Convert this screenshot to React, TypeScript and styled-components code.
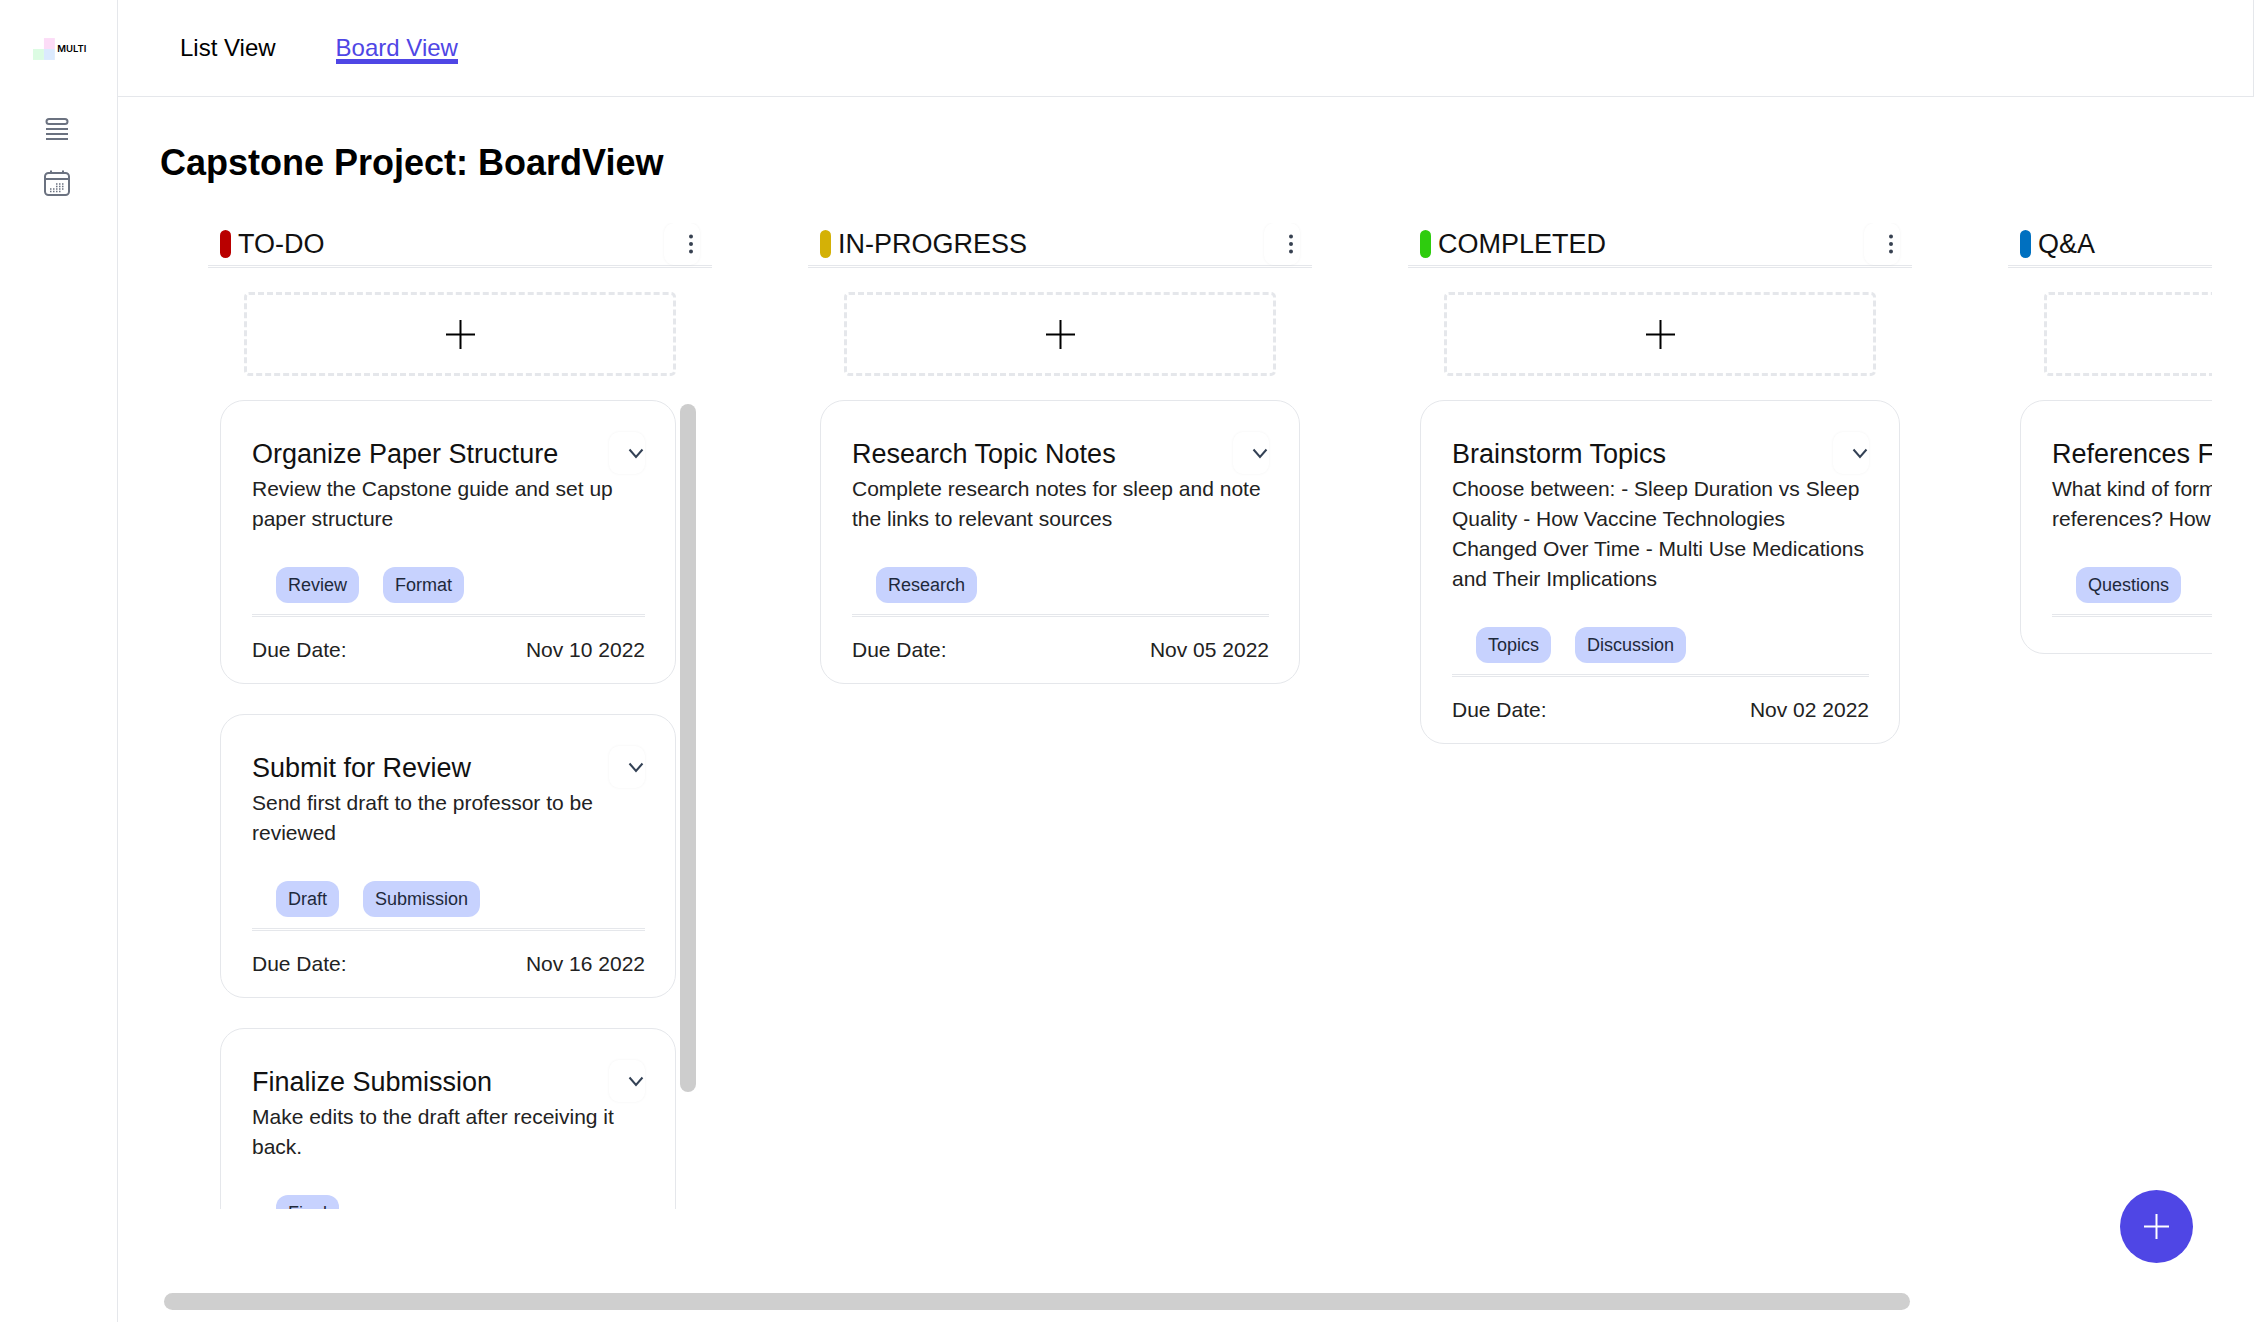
import React from "react";
import styled, { createGlobalStyle } from "styled-components";

const Global = createGlobalStyle`
  html, body { margin: 0; padding: 0; background: #fff; overflow: hidden; }
  * { box-sizing: border-box; }
  body { font-family: "Liberation Sans", Arial, sans-serif; }
`;

const Shell = styled.div`
  display: flex;
  width: 2254px;
  height: 1322px;
  overflow: hidden;
`;

const Sidebar = styled.aside`
  width: 118px;
  flex-shrink: 0;
  border-right: 1px solid #e5e7eb;
  display: flex;
  flex-direction: column;
  align-items: center;
  padding-top: 37px;
`;

const Logo = styled.div`
  display: flex;
  align-items: flex-end;
  width: 54px;
  height: 24px;
  margin-left: 2px;
`;

const LogoText = styled.span`
  font-family: "Inter", sans-serif;
  font-size: 9.5px;
  font-weight: 600;
  line-height: 10px;
  color: #000;
  margin: 0 0 7px 2px;
`;

const SideNav = styled.nav`
  display: flex;
  flex-direction: column;
  align-items: center;
  gap: 30px;
  margin: 57px 3px 0 0;
`;

const Main = styled.main`
  flex: 1;
  min-width: 0;
  display: flex;
  flex-direction: column;
`;

const TopBar = styled.header`
  height: 97px;
  flex-shrink: 0;
  border-bottom: 1px solid #e5e7eb;
  border-right: 1px solid #e5e7eb;
  display: flex;
  align-items: flex-start;
  gap: 60px;
  padding: 34px 0 0 62px;
`;

const Tab = styled.a<{ $active?: boolean }>`
  font-size: 24px;
  line-height: 28px;
  height: 25px;
  color: ${(p) => (p.$active ? "#4f46e5" : "#000")};
  border-bottom: ${(p) => (p.$active ? "5px solid #4f46e5" : "none")};
  box-sizing: content-box;
`;

const Content = styled.div`
  padding: 45px 0 0 42px;
  flex: 1;
  min-height: 0;
  display: flex;
  flex-direction: column;
`;

const Title = styled.h1`
  margin: 0;
  font-size: 36px;
  line-height: 42px;
  font-weight: 700;
  color: #000;
`;

const BoardViewport = styled.div`
  margin: 39px 0 0 48px;
  width: 2004px;
  height: 986px;
  overflow: hidden;
  flex-shrink: 0;
`;

const Columns = styled.div`
  display: flex;
  gap: 96px;
`;

const Column = styled.section`
  width: 504px;
  flex-shrink: 0;
`;

const ColumnHead = styled.div`
  height: 45px;
  border-bottom: 3px double #e5e7eb;
  display: flex;
  align-items: flex-start;
  padding-left: 12px;
`;

const Pill = styled.span<{ $color: string }>`
  width: 11px;
  height: 28px;
  margin-top: 7px;
  border-radius: 6px;
  background: ${(p) => p.$color};
`;

const ColumnName = styled.h2`
  margin: 5px 0 0 7px;
  font-size: 27px;
  line-height: 32px;
  font-weight: 400;
  color: #111;
  flex: 1;
`;

const IconButton = styled.button`
  width: 36px;
  height: 42px;
  padding: 0;
  border: 0;
  background: #fff;
  border-radius: 10px;
  box-shadow: 0 0 3px rgba(0, 0, 0, 0.05);
  display: flex;
  align-items: center;
  justify-content: center;
`;

const MenuButton = styled(IconButton)`
  margin-right: 12px;
`;

const AddBox = styled.button`
  display: flex;
  align-items: center;
  justify-content: center;
  width: 432px;
  height: 84px;
  margin: 24px 0 24px 36px;
  padding: 0;
  background: #fff;
  border: 3px dashed #e5e7eb;
  border-radius: 5px;
`;

const Lane = styled.div`
  display: flex;
  margin-left: 12px;
  height: 809px;
`;

const CardList = styled.div<{ $scrolling?: boolean }>`
  width: ${(p) => (p.$scrolling ? "456px" : "480px")};
  flex-shrink: 0;
  display: flex;
  flex-direction: column;
  gap: 30px;
  overflow: hidden;
`;

const ScrollThumb = styled.div`
  width: 16px;
  height: 688px;
  margin: 4px 0 0 4px;
  border-radius: 8px;
  background: #cdcdcd;
`;

const Card = styled.article`
  flex-shrink: 0;
  border: 1px solid #e5e7eb;
  border-radius: 24px;
  padding: 31px 30px 18px 31px;
  background: #fff;
`;

const CardHead = styled.div`
  display: flex;
  justify-content: space-between;
  align-items: flex-start;
  height: 42px;
`;

const CardTitle = styled.h3`
  margin: 6px 0 0;
  font-size: 27px;
  line-height: 32px;
  font-weight: 400;
  color: #111;
  white-space: nowrap;
`;

const CardText = styled.p`
  margin: 0;
  font-size: 21px;
  line-height: 30px;
  color: #222;
`;

const Tags = styled.div`
  display: flex;
  gap: 24px;
  margin: 33px 0 11px 24px;
`;

const Tag = styled.span`
  height: 36px;
  padding: 0 12px;
  border-radius: 12px;
  background: #c7d2fe;
  font-size: 18px;
  line-height: 36px;
  color: #1e293b;
`;

const Divider = styled.div`
  height: 3px;
  border-top: 3px double #e5e7eb;
`;

const Due = styled.div`
  display: flex;
  justify-content: space-between;
  margin-top: 18px;
  font-size: 21px;
  line-height: 30px;
  color: #222;
`;

const HScroll = styled.div`
  width: 1746px;
  height: 17px;
  margin: 84px 0 0 4px;
  border-radius: 9px;
  background: #cfcfcf;
  flex-shrink: 0;
`;

const Fab = styled.button`
  position: fixed;
  right: 61px;
  bottom: 59px;
  width: 73px;
  height: 73px;
  padding: 0;
  border: 0;
  border-radius: 50%;
  background: #4f46e5;
  display: flex;
  align-items: center;
  justify-content: center;
`;

const Plus = ({ size, color, w }: { size: number; color: string; w: number }) => (
  <svg width={size} height={size} viewBox={`0 0 ${size} ${size}`} fill="none">
    <path d={`M${size / 2} 0V${size}M0 ${size / 2}H${size}`} stroke={color} strokeWidth={w} />
  </svg>
);

const Dots = () => (
  <svg width="6" height="20" viewBox="0 0 6 20" fill="#374151" style={{ marginLeft: 18 }}>
    <circle cx="3" cy="2.5" r="2" />
    <circle cx="3" cy="10" r="2" />
    <circle cx="3" cy="17.5" r="2" />
  </svg>
);

const Chevron = () => (
  <svg width="16" height="11" viewBox="0 0 16 11" fill="none" style={{ marginLeft: 18 }}>
    <path d="M1.5 1.5 8 9l6.5-7.5" stroke="#334155" strokeWidth="2" />
  </svg>
);

const LogoMark = () => (
  <svg width="23" height="23" viewBox="0 0 23 23">
    <rect x="11" y="0" width="11" height="11" fill="#fcdcf7" />
    <rect x="0" y="11" width="11" height="11" fill="#dcfce3" />
    <rect x="11" y="11" width="11" height="11" fill="#dbeafe" />
  </svg>
);

const ListIcon = () => (
  <svg width="24" height="22" viewBox="0 0 24 22" fill="none" stroke="#6b7280" strokeWidth="2">
    <rect x="1.5" y="1" width="21" height="5" rx="2.5" />
    <path d="M1 11h22M1 16h22M1 21h22" />
  </svg>
);

const CalendarIcon = () => (
  <svg width="26" height="26" viewBox="0 0 26 26" fill="none" stroke="#6b7280" strokeWidth="2">
    <rect x="1" y="3" width="24" height="22" rx="3.5" />
    <path d="M1 9h24M7 0.5V4M19 0.5V4" />
    <path
      d="M6 19h1.5M9 19h1.5M12 19h1.5M15 19h1.5M6 21.5h1.5M9 21.5h1.5M12 21.5h1.5M15 21.5h1.5M12 16.5h1.5M15 16.5h1.5M18 16.5h1.5M18 14h1.5M15 14h1.5M12 14h1.5M18 19h1.5"
      strokeWidth="1.3"
    />
  </svg>
);

type CardData = { title: string; text: string; tags: string[]; due?: string };
type ColumnData = { name: string; color: string; cards: CardData[]; scroll?: boolean };

const columns: ColumnData[] = [
  {
    name: "TO-DO",
    color: "#b90000",
    scroll: true,
    cards: [
      {
        title: "Organize Paper Structure",
        text: "Review the Capstone guide and set up paper structure",
        tags: ["Review", "Format"],
        due: "Nov 10 2022",
      },
      {
        title: "Submit for Review",
        text: "Send first draft to the professor to be reviewed",
        tags: ["Draft", "Submission"],
        due: "Nov 16 2022",
      },
      {
        title: "Finalize Submission",
        text: "Make edits to the draft after receiving it back.",
        tags: ["Final"],
        due: "Nov 20 2022",
      },
    ],
  },
  {
    name: "IN-PROGRESS",
    color: "#d4b106",
    cards: [
      {
        title: "Research Topic Notes",
        text: "Complete research notes for sleep and note the links to relevant sources",
        tags: ["Research"],
        due: "Nov 05 2022",
      },
    ],
  },
  {
    name: "COMPLETED",
    color: "#2ecc0e",
    cards: [
      {
        title: "Brainstorm Topics",
        text: "Choose between: - Sleep Duration vs Sleep Quality - How Vaccine Technologies Changed Over Time - Multi Use Medications and Their Implications",
        tags: ["Topics", "Discussion"],
        due: "Nov 02 2022",
      },
    ],
  },
  {
    name: "Q&A",
    color: "#0070c0",
    cards: [
      {
        title: "References Format",
        text: "What kind of format do we use for references? How should they be cited?",
        tags: ["Questions"],
      },
    ],
  },
];

export default function App() {
  return (
    <Shell>
      <Global />
      <Sidebar>
        <Logo>
          <LogoMark />
          <LogoText>MULTI</LogoText>
        </Logo>
        <SideNav>
          <ListIcon />
          <CalendarIcon />
        </SideNav>
      </Sidebar>
      <Main>
        <TopBar>
          <Tab>List View</Tab>
          <Tab $active>Board View</Tab>
        </TopBar>
        <Content>
          <Title>Capstone Project: BoardView</Title>
          <BoardViewport>
            <Columns>
              {columns.map((col) => (
                <Column key={col.name}>
                  <ColumnHead>
                    <Pill $color={col.color} />
                    <ColumnName>{col.name}</ColumnName>
                    <MenuButton aria-label="Column menu">
                      <Dots />
                    </MenuButton>
                  </ColumnHead>
                  <AddBox aria-label="Add task">
                    <Plus size={29} color="#000" w={2} />
                  </AddBox>
                  <Lane>
                    <CardList $scrolling={col.scroll}>
                      {col.cards.map((card) => (
                        <Card key={card.title}>
                          <CardHead>
                            <CardTitle>{card.title}</CardTitle>
                            <IconButton aria-label="Expand card">
                              <Chevron />
                            </IconButton>
                          </CardHead>
                          <CardText>{card.text}</CardText>
                          <Tags>
                            {card.tags.map((t) => (
                              <Tag key={t}>{t}</Tag>
                            ))}
                          </Tags>
                          <Divider />
                          <Due>
                            {card.due && <span>Due Date:</span>}
                            {card.due && <span>{card.due}</span>}
                          </Due>
                        </Card>
                      ))}
                    </CardList>
                    {col.scroll && <ScrollThumb />}
                  </Lane>
                </Column>
              ))}
            </Columns>
          </BoardViewport>
          <HScroll />
        </Content>
      </Main>
      <Fab aria-label="Add">
        <Plus size={25} color="#fff" w={2} />
      </Fab>
    </Shell>
  );
}
